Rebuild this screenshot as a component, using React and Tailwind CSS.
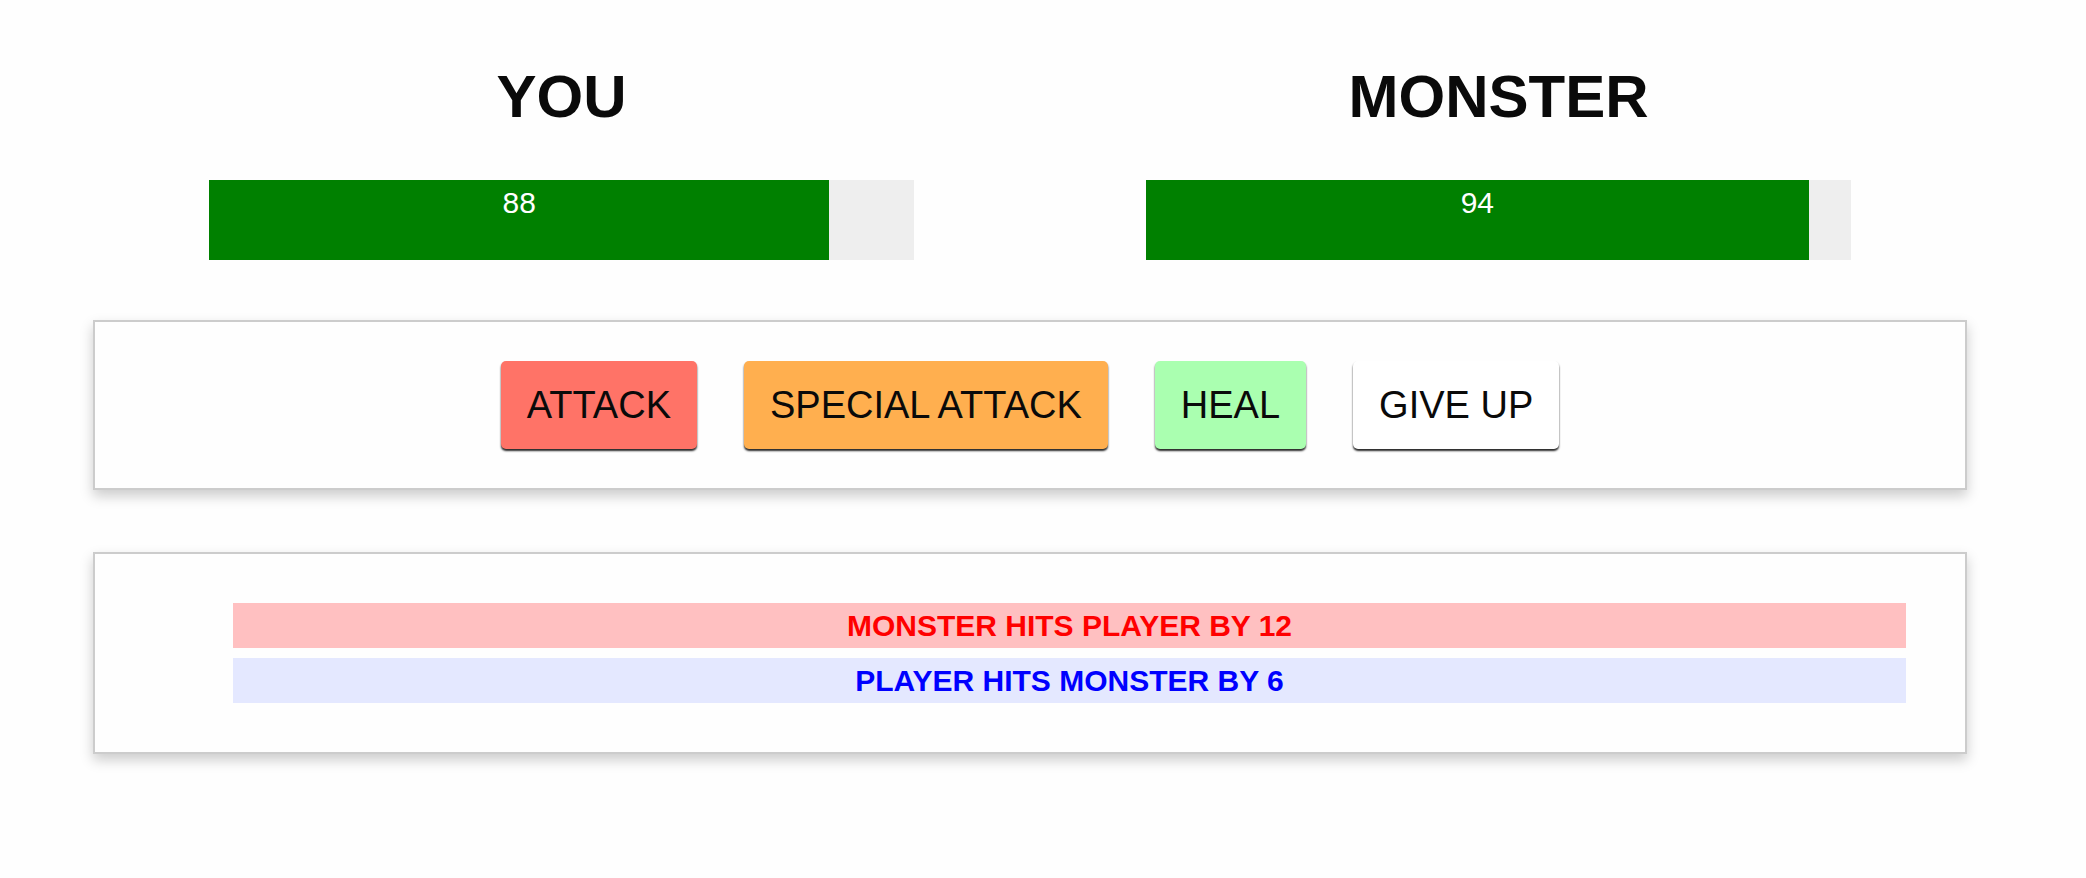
import React from 'react'

const fighters = [
  { name: 'YOU', health: 88 },
  { name: 'MONSTER', health: 94 },
]

const actions = [
  { label: 'ATTACK', className: 'bg-[#ff7367]' },
  { label: 'SPECIAL ATTACK', className: 'bg-[#ffaf4f]' },
  { label: 'HEAL', className: 'bg-[#aaffb0]' },
  { label: 'GIVE UP', className: 'bg-white' },
]

const turns = [
  { text: 'Monster hits player by 12', isPlayer: false },
  { text: 'Player hits monster by 6', isPlayer: true },
]

const HealthBar = ({ name, health }) => (
  <div className="flex flex-col items-center">
    <h1 className="text-[60px] font-bold leading-none">{name}</h1>
    <div className="mt-[53px] h-[80px] w-[705px] bg-[#eeeeee]">
      <div
        className="h-full bg-[#008000] text-center text-[30px] leading-[1.5] text-white"
        style={{ width: `${health}%` }}
      >
        {health}
      </div>
    </div>
  </div>
)

export default function App() {
  return (
    <div className="min-h-screen bg-[#fefefe] font-['Liberation_Sans',Arial,sans-serif] text-[#0a0a0a]">
      <div className="ml-[93px] w-[1874px] pt-[67px]">
        <div className="grid grid-cols-2">
          {fighters.map((f) => (
            <HealthBar key={f.name} name={f.name} health={f.health} />
          ))}
        </div>

        <div className="mt-[60px] flex h-[170px] items-center justify-center gap-[47px] border-2 border-[#cccccc] bg-[#fefefe] shadow-[0_6px_12px_#cccccc]">
          {actions.map((a) => (
            <button
              key={a.label}
              className={`${a.className} rounded-[5px] px-[26px] py-[22px] text-[38px] leading-[44px] text-[#0a0a0a] shadow-[0_2px_2px_rgba(0,0,0,0.85)]`}
            >
              {a.label}
            </button>
          ))}
        </div>

        <div className="mt-[62px] border-2 border-[#cccccc] bg-[#fefefe] pt-[49px] pb-[49px] shadow-[0_6px_12px_#cccccc]">
          <ul className="ml-[138px] mr-[59px] flex flex-col gap-[10px] text-[30px] font-bold uppercase leading-[45px]">
            {turns.map((t) => (
              <li
                key={t.text}
                className={
                  t.isPlayer
                    ? 'bg-[#e4e8ff] text-center text-[#0000ff]'
                    : 'bg-[#ffc0c1] text-center text-[#ff0000]'
                }
              >
                {t.text}
              </li>
            ))}
          </ul>
        </div>
      </div>
    </div>
  )
}
